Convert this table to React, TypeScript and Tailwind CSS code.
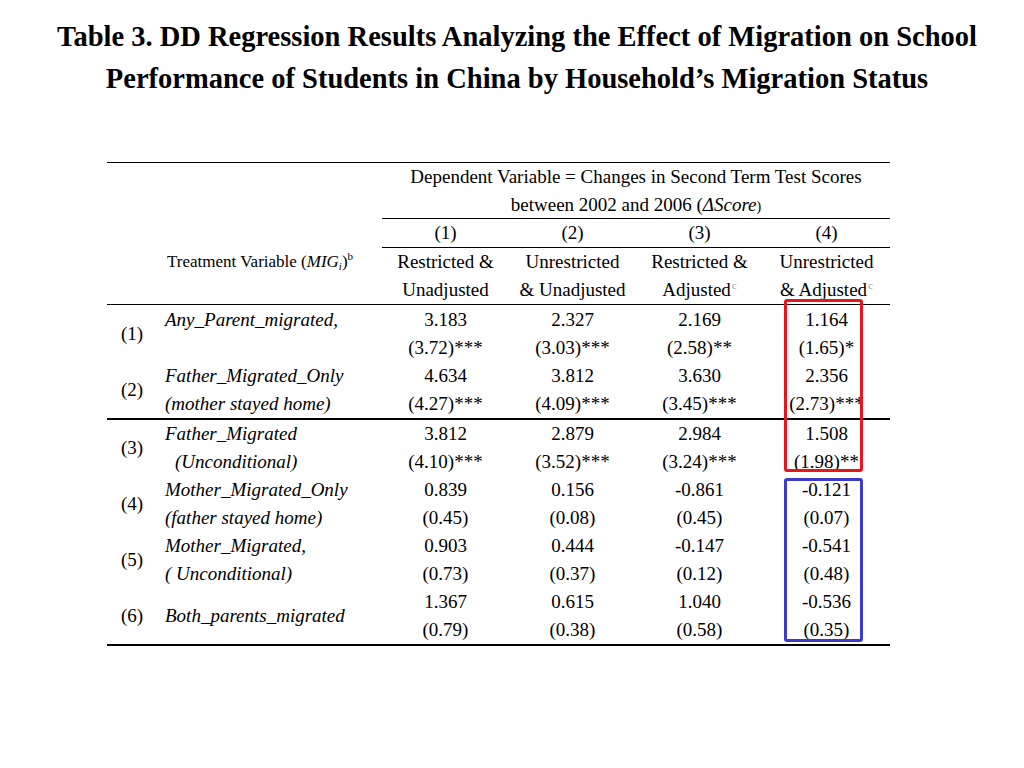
const serif = { fontFamily: '"Liberation Serif", "Times New Roman", serif' };

type Group = {
    no: string;
    lines: [string, string];
    center?: boolean;
    indent?: boolean;
    values: [string, string][];
    thick?: boolean;
};

const groups: Group[] = [
    {
        no: '(1)',
        lines: ['Any_Parent_migrated,', ''],
        values: [
            ['3.183', '(3.72)***'],
            ['2.327', '(3.03)***'],
            ['2.169', '(2.58)**'],
            ['1.164', '(1.65)*'],
        ],
    },
    {
        no: '(2)',
        lines: ['Father_Migrated_Only', '(mother stayed home)'],
        thick: true,
        values: [
            ['4.634', '(4.27)***'],
            ['3.812', '(4.09)***'],
            ['3.630', '(3.45)***'],
            ['2.356', '(2.73)***'],
        ],
    },
    {
        no: '(3)',
        lines: ['Father_Migrated', '(Unconditional)'],
        indent: true,
        values: [
            ['3.812', '(4.10)***'],
            ['2.879', '(3.52)***'],
            ['2.984', '(3.24)***'],
            ['1.508', '(1.98)**'],
        ],
    },
    {
        no: '(4)',
        lines: ['Mother_Migrated_Only', '(father stayed home)'],
        values: [
            ['0.839', '(0.45)'],
            ['0.156', '(0.08)'],
            ['-0.861', '(0.45)'],
            ['-0.121', '(0.07)'],
        ],
    },
    {
        no: '(5)',
        lines: ['Mother_Migrated,', '( Unconditional)'],
        values: [
            ['0.903', '(0.73)'],
            ['0.444', '(0.37)'],
            ['-0.147', '(0.12)'],
            ['-0.541', '(0.48)'],
        ],
    },
    {
        no: '(6)',
        lines: ['Both_parents_migrated', ''],
        center: true,
        values: [
            ['1.367', '(0.79)'],
            ['0.615', '(0.38)'],
            ['1.040', '(0.58)'],
            ['-0.536', '(0.35)'],
        ],
    },
];

const cols = 'grid grid-cols-[48px_227px_127px_127px_127px_127px]';

function Sup({ children }: { children: string }) {
    return <sup className="text-[11px] text-gray-400 align-baseline relative -top-[7px] ml-[1px]">{children}</sup>;
}

function Header() {
    return (
        <div className={`${cols} grid-rows-[28px_28px_29px_28px_28px] border-b border-black text-[19px] leading-[28px] text-center`}>
            <div className="col-start-3 col-span-4">Dependent Variable = Changes in Second Term Test Scores</div>
            <div className="col-start-3 col-span-4 border-b border-black">
                between 2002 and 2006 (<i>ΔScore</i><span className="text-[14px]">)</span>
            </div>
            <div className="col-start-3 border-b border-black">(1)</div>
            <div className="border-b border-black">(2)</div>
            <div className="border-b border-black">(3)</div>
            <div className="border-b border-black">(4)</div>
            <div className="col-start-2 text-left pl-[12px] text-[17px]">
                Treatment Variable (<i>MIG</i><sub className="italic text-[11px]">i</sub>)<sup className="text-[11px] align-baseline relative -top-[7px]">b</sup>
            </div>
            <div>Restricted &amp;</div>
            <div>Unrestricted</div>
            <div>Restricted &amp;</div>
            <div>Unrestricted</div>
            <div className="col-start-3">Unadjusted</div>
            <div>&amp; Unadjusted</div>
            <div>Adjusted<Sup>c</Sup></div>
            <div>&amp; Adjusted<Sup>c</Sup></div>
        </div>
    );
}

function Row({ g }: { g: Group }) {
    return (
        <div className={`${cols} grid-rows-[28px_28px] text-[19px] leading-[28px] ${g.thick ? 'border-b-2 border-black' : ''}`}>
            <div className="row-span-2 flex items-center justify-center pl-[2px]">{g.no}</div>
            {g.center ? (
                <div className="row-span-2 flex items-center pl-[10px] italic">{g.lines[0]}</div>
            ) : (
                <div className="row-span-2 flex flex-col pl-[10px] italic">
                    <div>{g.lines[0]}</div>
                    <div className={g.indent ? 'pl-[10px]' : ''}>{g.lines[1] || '\u00a0'}</div>
                </div>
            )}
            {g.values.map(([a, b], i) => (
                <div key={i} className="row-span-2 flex flex-col text-center">
                    <div>{a}</div>
                    <div>{b}</div>
                </div>
            ))}
        </div>
    );
}

export default function App() {
    return (
        <div className="w-[1024px] h-[768px] bg-white text-black" style={serif}>
            <h1 className="pt-[16px] pl-[10px] text-center font-bold text-[28.5px] leading-[42px]">
                Table 3. DD Regression Results Analyzing the Effect of Migration on School
                <br />
                Performance of Students in China by Household’s Migration Status
            </h1>
            <div className="relative ml-[107px] mt-[62px] w-[783px] border-t border-black">
                <Header />
                <div className="pt-[1px] border-b-2 border-black">
                    {groups.map((g) => (
                        <Row key={g.no} g={g} />
                    ))}
                </div>
                <div className="absolute left-[677px] top-[136px] w-[79px] h-[173px] border-[3px] border-[#e8151c] rounded-[3px]" />
                <div className="absolute left-[677px] top-[315px] w-[79px] h-[164px] border-[3px] border-[#3b3bc9] rounded-[3px]" />
            </div>
        </div>
    );
}
